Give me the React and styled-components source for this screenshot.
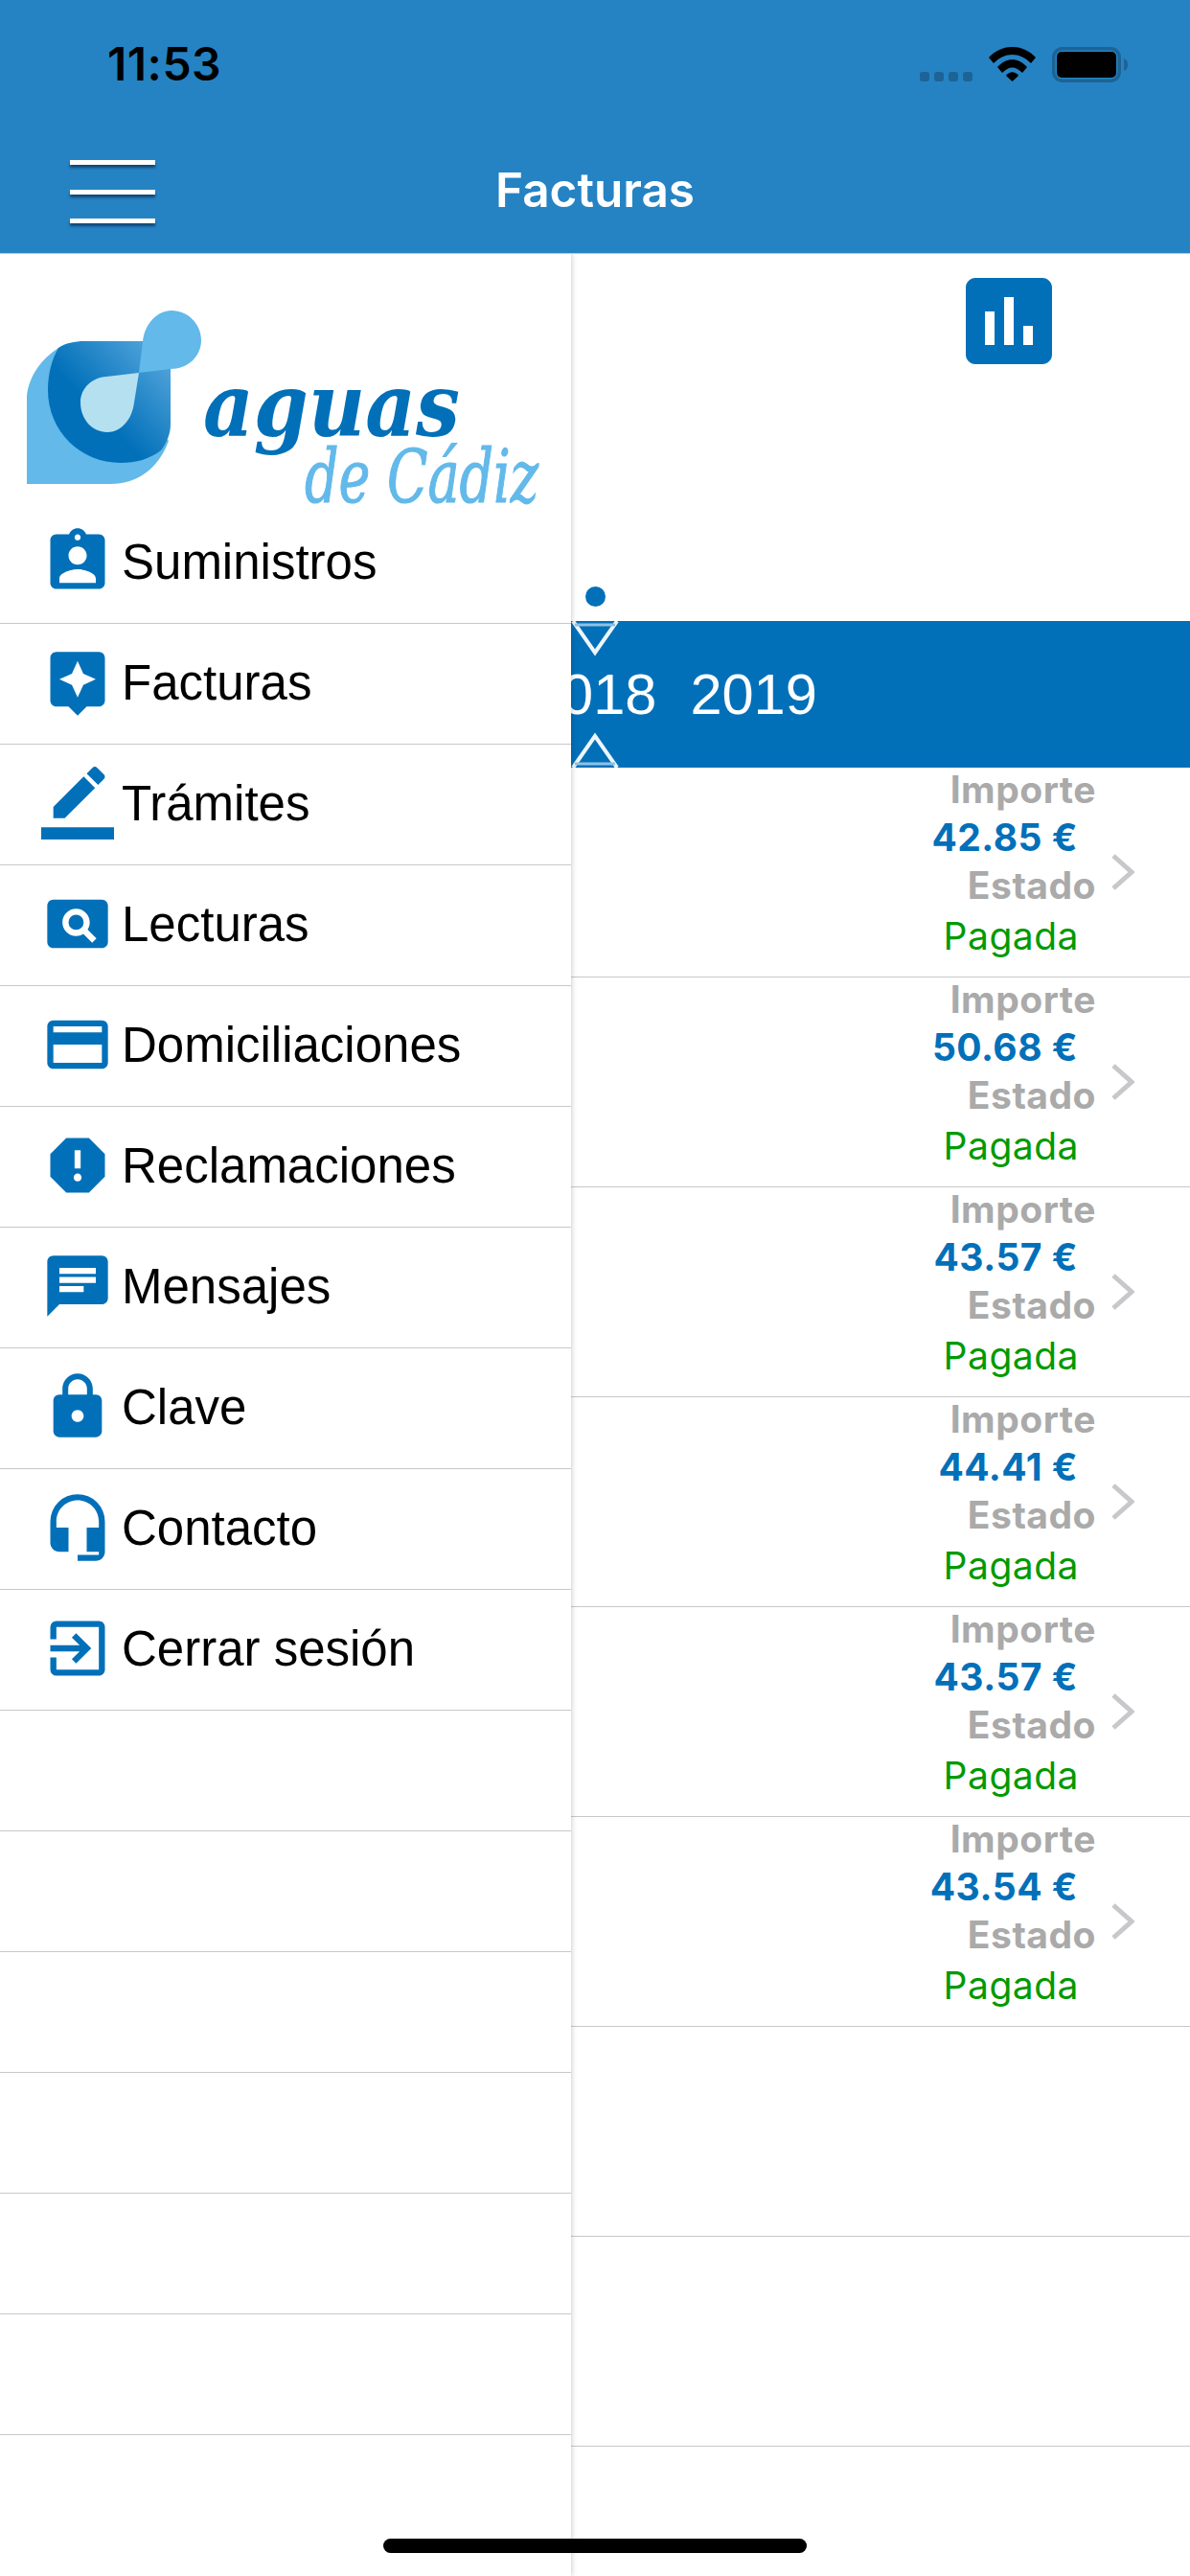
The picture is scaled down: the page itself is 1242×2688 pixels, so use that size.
import React from 'react';
import styled, { createGlobalStyle } from 'styled-components';
import {
  MdAssignmentInd,
  MdAssistant,
  MdPageview,
  MdCreditCard,
  MdReport,
  MdChat,
  MdLock,
  MdHeadsetMic,
  MdExitToApp,
  MdAssessment,
} from 'react-icons/md';

const BLUE = '#0270b9';
const LINE = '#c8c7cc';

const GlobalStyle = createGlobalStyle`
  html, body {
    margin: 0;
    padding: 0;
    background: #fff;
  }
`;

const Screen = styled.div`
  position: relative;
  width: 1242px;
  height: 2688px;
  overflow: hidden;
  background: #fff;
  display: flex;
  flex-direction: column;
  font-family: 'Liberation Sans', Arial, sans-serif;
`;

const Header = styled.header`
  height: 264px;
  flex: none;
  background: #2583c4;
  display: flex;
  flex-direction: column;
  box-shadow: 0 1px 0 ${LINE};
  position: relative;
  z-index: 3;
`;

const StatusBar = styled.div`
  height: 132px;
  display: flex;
  align-items: flex-start;
  justify-content: space-between;
  padding: 39px 65px 0 112px;
  box-sizing: border-box;
`;

const Clock = styled.span`
  font-family: Inter, sans-serif;
  font-weight: 600;
  font-size: 48px;
  letter-spacing: 0.5px;
  line-height: 56px;
  color: #000;
`;

const StatusIcons = styled.div`
  display: flex;
  align-items: flex-start;
  gap: 17px;
  margin-top: 10px;
`;

const SignalDots = styled.div`
  display: flex;
  gap: 5px;
  margin-top: 26px;
`;

const SignalDot = styled.span`
  width: 10px;
  height: 10px;
  border-radius: 3px;
  background: #1d6395;
`;

const NavBar = styled.div`
  flex: 1;
  display: flex;
  align-items: center;
  justify-content: center;
  position: relative;
`;

const NavTitle = styled.h1`
  margin: 0;
  font-family: Inter, sans-serif;
  font-weight: 600;
  font-size: 49.5px;
  color: #fff;
`;

const Burger = styled.div`
  position: absolute;
  left: 73px;
  top: 35px;
  width: 89px;
  display: flex;
  flex-direction: column;
  gap: 25.5px;
`;

const BurgerLine = styled.span`
  height: 5px;
  background: #fff;
  box-shadow: 0 3px 3px rgba(0, 30, 60, 0.6);
`;

const Body = styled.div`
  flex: 1;
  display: flex;
  min-height: 0;
`;

const Menu = styled.nav`
  width: 596px;
  flex: none;
  background: #fff;
  box-shadow: 0 0 6px rgba(0, 0, 0, 0.25);
  position: relative;
  z-index: 2;
`;

const LogoBox = styled.div`
  height: 261px;
`;

const MenuRow = styled.div`
  height: 126px;
  box-sizing: border-box;
  border-bottom: 1px solid ${LINE};
  display: flex;
  align-items: center;
  padding: 0 0 3px 43px;
  gap: 8px;
  font-size: 51px;
  color: #000;
`;

const Content = styled.main`
  flex: 1;
  min-width: 0;
  overflow: hidden;
`;

const Toolbar = styled.div`
  height: 384px;
  box-sizing: border-box;
  position: relative;
  padding: 11px 0 0 397px;
  color: ${BLUE};
`;

const YearDot = styled.span`
  position: absolute;
  left: 15px;
  top: 348px;
  width: 21px;
  height: 21px;
  border-radius: 50%;
  background: ${BLUE};
`;

const YearBand = styled.div`
  position: relative;
  height: 153px;
  background: ${BLUE};
  color: #fff;
  display: flex;
  align-items: center;
  gap: 35px;
  font-size: 59.5px;
  overflow: hidden;
`;

const FirstYear = styled.span`
  margin-left: -43px;
`;

const Marker = styled.svg`
  position: absolute;
  left: 0;
  ${(p) => (p.$up ? 'bottom: 0;' : 'top: 0;')}
`;

const BillRow = styled.div`
  height: 219px;
  box-sizing: border-box;
  border-bottom: 1px solid ${LINE};
  display: flex;
  justify-content: flex-end;
  align-items: center;
  padding-right: 58px;
  gap: 16px;
`;

const BillInfo = styled.div`
  display: flex;
  flex-direction: column;
  align-items: flex-end;
  align-self: flex-start;
  margin-top: -2px;
  font-family: Inter, sans-serif;
  font-size: 39px;
  line-height: 50px;
  letter-spacing: 0.5px;
`;

const Label = styled.span`
  font-weight: 700;
  color: #aaa;
`;

const Amount = styled.span`
  font-weight: 700;
  color: ${BLUE};
  margin-right: 19px;
`;

const Status = styled.span`
  color: #009a00;
  margin: 3px 18px 0 0;
`;

const HomeBar = styled.div`
  position: absolute;
  left: 400px;
  bottom: 24px;
  width: 442px;
  height: 15px;
  border-radius: 8px;
  background: #000;
  z-index: 3;
`;

const EditIcon = () => (
  <svg width="76" height="76" viewBox="0 0 24 24" fill={BLUE}>
    <path d="M17.75 7L14 3.25l-10 10V17h3.75l10-10zm2.96-2.96c.39-.39.39-1.02 0-1.41L18.37.29c-.39-.39-1.02-.39-1.41 0L15 2.25 18.75 6l1.96-1.96z" />
    <path d="M0 20h24v4H0z" />
  </svg>
);

const menuItems = [
  { label: 'Suministros', Icon: MdAssignmentInd },
  { label: 'Facturas', Icon: MdAssistant },
  { label: 'Trámites', Icon: EditIcon },
  { label: 'Lecturas', Icon: MdPageview },
  { label: 'Domiciliaciones', Icon: MdCreditCard },
  { label: 'Reclamaciones', Icon: MdReport },
  { label: 'Mensajes', Icon: MdChat },
  { label: 'Clave', Icon: MdLock },
  { label: 'Contacto', Icon: MdHeadsetMic },
  { label: 'Cerrar sesión', Icon: MdExitToApp },
  {},
  {},
  {},
  {},
  {},
  {},
];

const bills = ['42.85', '50.68', '43.57', '44.41', '43.57', '43.54', null, null];

const Wifi = () => (
  <svg width="49" height="36" viewBox="0 0 49 36" fill="#000">
    <path d="M0 11 C14 -3.7 35 -3.7 49 11 L44 17 C32 5 17 5 5 17 Z" />
    <path d="M9 21 C18 10.5 31 10.5 40 21 L35 27 C28 19.5 21 19.5 14 27 Z" />
    <path d="M18 30 C21.5 25 27.5 25 31 30 L24.5 36 Z" />
  </svg>
);

const Battery = () => (
  <svg width="79" height="37" viewBox="0 0 79 37">
    <rect x="1.75" y="1.75" width="68.5" height="33.5" rx="9" fill="none" stroke="#1d6395" strokeWidth="3.5" />
    <rect x="5" y="5" width="62" height="27" rx="5" fill="#000" />
    <path d="M75 12 C78 13 79 15.5 79 18.5 C79 21.5 78 24 75 25 Z" fill="#1d6395" />
  </svg>
);

// logo uses page coordinates, shifted up by the header height
const Logo = () => (
  <svg width="596" height="261" viewBox="0 264 596 261" style={{ overflow: 'visible' }}>
    <defs>
      <linearGradient id="drop" x1="0.1" y1="0.9" x2="0.9" y2="0.15">
        <stop offset="0.4" stopColor="#0270b9" />
        <stop offset="1" stopColor="#4ba0d8" />
      </linearGradient>
    </defs>
    <path d="M28 505 V413 C30 392 44 374 61 363 L120 400 L176 460 C166 488 144 505 115 505 Z" fill="#62b9ea" />
    <path
      d="M61 363 C68 358 78 356 88 356 H149 L178 385 V443 C178 452 174 462 168 470 C156 479 142 483 126 483 C84 483 50 450 50 407 C50 390 54 375 61 363 Z"
      fill="url(#drop)"
    />
    <path d="M84 420 C84 405 96 394 111 393 L145 389 L140 420 C138 438 126 451 112 451 C96 451 84 437 84 420 Z" fill="#b5e0f0" />
    <path d="M149 356 C151 338 164 324 179 324 C196 324 210 338 210 355 C210 372 196 385 178 385 L145 389 Z" fill="#62b9ea" />
    <text
      x="212"
      y="455"
      fontFamily="'DejaVu Serif', serif"
      fontWeight="700"
      fontStyle="italic"
      fontSize="92"
      fill={BLUE}
      textLength="268"
      lengthAdjust="spacingAndGlyphs"
    >
      aguas
    </text>
    <text
      x="318"
      y="524"
      fontFamily="'DejaVu Serif', serif"
      fontStyle="italic"
      fontSize="76"
      fill="#62b9ea"
      stroke="#62b9ea"
      strokeWidth="1.2"
      textLength="244"
      lengthAdjust="spacingAndGlyphs"
    >
      de Cádiz
    </text>
  </svg>
);

const App = () => {
  return (
    <Screen>
      <GlobalStyle />
      <Header>
        <StatusBar>
          <Clock>11:53</Clock>
          <StatusIcons>
            <SignalDots>
              <SignalDot />
              <SignalDot />
              <SignalDot />
              <SignalDot />
            </SignalDots>
            <Wifi />
            <Battery />
          </StatusIcons>
        </StatusBar>
        <NavBar>
          <Burger>
            <BurgerLine />
            <BurgerLine />
            <BurgerLine />
          </Burger>
          <NavTitle>Facturas</NavTitle>
        </NavBar>
      </Header>
      <Body>
        <Menu>
          <LogoBox>
            <Logo />
          </LogoBox>
          {menuItems.map(({ label, Icon }, i) => (
            <MenuRow key={i}>
              {Icon && <Icon size={76} color={BLUE} />}
              {label}
            </MenuRow>
          ))}
        </Menu>
        <Content>
          <Toolbar>
            <MdAssessment size={120} />
            <YearDot />
          </Toolbar>
          <YearBand>
            <Marker width="50" height="37" viewBox="0 0 50 37">
              <path d="M2 0 L25 33 L48 0" fill="none" stroke="#eef6fb" strokeWidth="4" />
              <path d="M4 4 H46" fill="none" stroke="#8fc1e3" strokeWidth="3" />
            </Marker>
            <FirstYear>2018</FirstYear>
            <span>2019</span>
            <Marker $up width="50" height="37" viewBox="0 0 50 37">
              <path d="M2 37 L25 4 L48 37" fill="none" stroke="#eef6fb" strokeWidth="4" />
              <path d="M4 33 H46" fill="none" stroke="#8fc1e3" strokeWidth="3" />
            </Marker>
          </YearBand>
          {bills.map((amount, i) => (
            <BillRow key={i}>
              {amount && (
                <>
                  <BillInfo>
                    <Label>Importe</Label>
                    <Amount>{amount} €</Amount>
                    <Label>Estado</Label>
                    <Status>Pagada</Status>
                  </BillInfo>
                  <svg width="24" height="38" viewBox="0 0 24 38">
                    <path d="M2 2 L21 19 L2 36" fill="none" stroke="#c8c8cc" strokeWidth="5" />
                  </svg>
                </>
              )}
            </BillRow>
          ))}
        </Content>
      </Body>
      <HomeBar />
    </Screen>
  );
};

export default App;
